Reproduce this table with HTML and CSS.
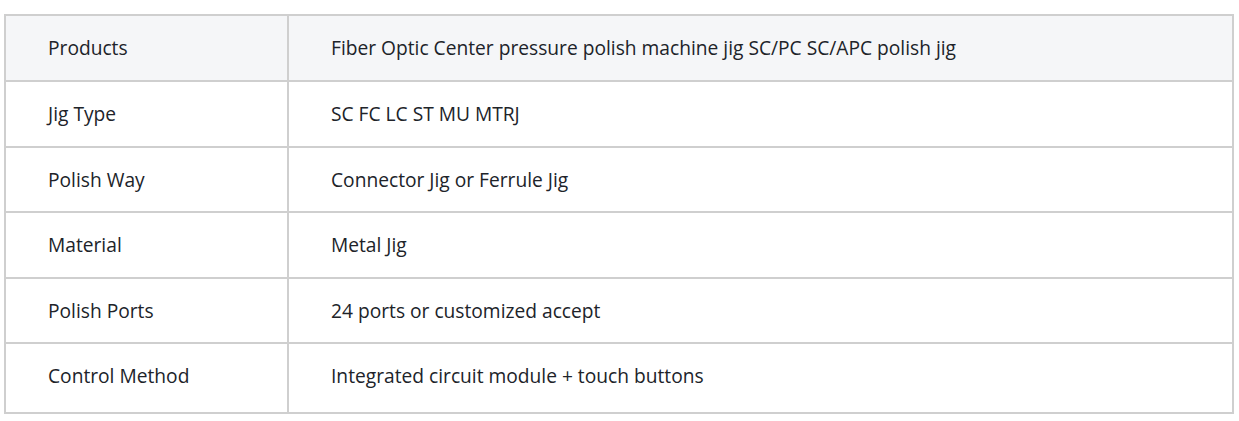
FILE: index.html
```html
<!DOCTYPE html>
<html lang="en">
<head>
<meta charset="utf-8">
<title>Specs</title>
<link rel="stylesheet" href="styles.css">
</head>
<body>
<table class="spec">
  <tr class="head r64"><td class="k">Products</td><td class="v">Fiber Optic Center pressure polish machine jig SC/PC SC/APC polish jig</td></tr>
  <tr class="r64"><td class="k">Jig Type</td><td class="v">SC FC LC ST MU MTRJ</td></tr>
  <tr class="r63"><td class="k">Polish Way</td><td class="v">Connector Jig or Ferrule Jig</td></tr>
  <tr class="r64"><td class="k">Material</td><td class="v">Metal Jig</td></tr>
  <tr class="r63"><td class="k">Polish Ports</td><td class="v">24 ports or customized accept</td></tr>
  <tr class="r68"><td class="k">Control Method</td><td class="v">Integrated circuit module + touch buttons</td></tr>
</table>
</body>
</html>
```
FILE: styles.css
```css
html, body { margin: 0; padding: 0; background: #fff; }
body { padding: 14px 0 0 4px; font-family: "Open Sans", "Noto Sans", sans-serif; color: #202329; }
.spec {
  border-collapse: separate;
  border-spacing: 0;
  width: 1230px;
  border-top: 2px solid #cfcfcf;
  border-left: 2px solid #cfcfcf;
  font-size: 19.2px;
  line-height: 24px;
}
.spec td {
  border-right: 2px solid #cfcfcf;
  border-bottom: 2px solid #cfcfcf;
  padding: 0;
  vertical-align: middle;
}
.spec tr.r64 td { height: 64px; }
.spec tr.r63 td { height: 63px; }
.spec tr.r68 td { height: 64px; padding-bottom: 4px; }
.spec tr.head td { background: #f5f6f8; }
.spec td.k { width: 239px; padding-left: 42px; }
.spec td.v { padding-left: 42px; }
```
